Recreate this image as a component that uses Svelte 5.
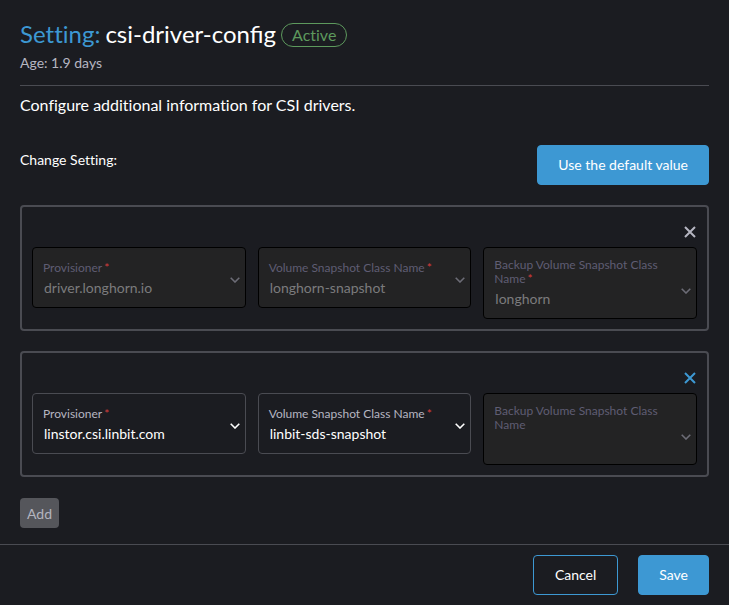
<script>
  const className = 'Volume Snapshot Class Name';

  const drivers = [
    {
      locked: true,
      fields: [
        { label: 'Provisioner', value: 'driver.longhorn.io', required: true, disabled: true },
        { label: className, value: 'longhorn-snapshot', required: true, disabled: true },
        { label: 'Backup ' + className, value: 'longhorn', required: true, disabled: true }
      ]
    },
    {
      locked: false,
      fields: [
        { label: 'Provisioner', value: 'linstor.csi.linbit.com', required: true, disabled: false },
        { label: className, value: 'linbit-sds-snapshot', required: true, disabled: false },
        { label: 'Backup ' + className, value: '', required: false, disabled: true }
      ]
    }
  ];
</script>

<div class="page">
  <main>
    <header>
      <h1>
        <a href="#settings">Setting:</a>
        <span class="name">csi-driver-config</span>
        <span class="badge">Active</span>
      </h1>
      <p class="age">Age: 1.9 days</p>
    </header>

    <p class="description">Configure additional information for CSI drivers.</p>

    <div class="toolbar">
      <h2>Change Setting:</h2>
      <button type="button" class="btn primary">Use the default value</button>
    </div>

    <div class="panels">
      {#each drivers as driver, row}
        <section class="panel">
          <button type="button" class="remove" disabled={driver.locked} aria-label="Remove driver">
            <svg width="12" height="12" viewBox="0 0 12 12" aria-hidden="true">
              <path d="M1 1 L11 11 M11 1 L1 11" />
            </svg>
          </button>
          <div class="fields">
            {#each driver.fields as field, col}
              <div class="field" class:disabled={field.disabled}>
                <label for="field-{row}-{col}" class:required={field.required}>{field.label}</label>
                <select id="field-{row}-{col}" disabled={field.disabled} required={field.required}>
                  <option value={field.value}>{field.value}</option>
                </select>
                <svg class="chevron" width="10" height="6" viewBox="0 0 10 6" aria-hidden="true">
                  <path d="M0.7 0.8 L5 5 L9.3 0.8" />
                </svg>
              </div>
            {/each}
          </div>
        </section>
      {/each}
    </div>

    <button type="button" class="add" disabled>Add</button>
  </main>

  <footer>
    <button type="button" class="btn outline">Cancel</button>
    <button type="button" class="btn primary">Save</button>
  </footer>
</div>

<style>
  :global(body) {
    margin: 0;
    background: #1b1c21;
  }

  .page {
    min-height: 100vh;
    box-sizing: border-box;
    display: flex;
    flex-direction: column;
    font-family: Lato, 'Liberation Sans', sans-serif;
    font-size: 14px;
    line-height: 20px;
    font-variant-ligatures: none;
    color: #fff;
    background: #1b1c21;
  }

  main {
    flex: 1;
    padding: 20px 20px 16px;
  }

  header {
    padding-bottom: 12px;
    border-bottom: 1px solid #4a4b52;
  }

  h1 {
    display: flex;
    align-items: center;
    margin: 0;
    font-size: 24px;
    line-height: 28px;
    font-weight: 400;
  }

  h1 a,
  .name {
    padding-bottom: 2px;
  }

  h1 a {
    color: #3d98d3;
    text-decoration: none;
  }

  .name {
    margin-left: 5px;
    font-variant-ligatures: common-ligatures;
  }

  .badge {
    margin-left: 5px;
    padding: 0 10px;
    border: 1px solid #5d995d;
    border-radius: 20px;
    color: #5d995d;
    font-size: 16px;
    line-height: 22px;
  }

  .age {
    margin: 3px 0 0;
    color: #b6b6c2;
  }

  .description {
    margin: 9px 0 0;
    font-size: 16px;
    line-height: 20px;
  }

  .toolbar {
    display: flex;
    justify-content: space-between;
    align-items: flex-start;
    margin: 30px 0 20px;
  }

  h2 {
    margin: 5px 0 0;
    font-size: 14px;
    line-height: 20px;
    font-weight: 400;
  }

  button,
  select {
    font-family: inherit;
    font-size: 14px;
    font-variant-ligatures: none;
  }

  .btn {
    height: 40px;
    padding: 0 20px 2px;
    border: 1px solid #3d98d3;
    border-radius: 4px;
    color: #fff;
    cursor: pointer;
  }

  .primary {
    background: #3d98d3;
  }

  .outline {
    padding: 0 21px 2px;
    background: transparent;
  }

  .panels {
    display: flex;
    flex-direction: column;
    gap: 20px;
  }

  .panel {
    display: flex;
    flex-direction: column;
    padding: 10px;
    border: 2px solid #4a4b52;
    border-radius: 4px;
  }

  .remove {
    align-self: flex-end;
    display: flex;
    align-items: center;
    height: 30px;
    padding: 0 1px;
    border: 0;
    background: none;
    color: #3d98d3;
    cursor: pointer;
  }

  .remove:disabled {
    color: #b6b6c2;
    cursor: not-allowed;
  }

  svg path {
    fill: none;
    stroke: currentColor;
    stroke-width: 2;
  }

  .fields {
    display: grid;
    grid-template-columns: repeat(3, 1fr);
    align-items: start;
    gap: 12px;
  }

  .field {
    position: relative;
    display: flex;
    flex-direction: column;
    box-sizing: border-box;
    min-height: 61px;
    padding: 10px 10px 9px;
    border: 1px solid #4a4b52;
    border-radius: 4px;
  }

  .field.disabled {
    border-color: #000;
    background: #232324;
  }

  label {
    margin-top: auto;
    color: #b6b6c2;
    font-size: 12px;
    line-height: 14px;
  }

  .disabled label {
    color: #5f5d73;
  }

  .required::after {
    content: '*';
    margin-left: 2px;
    color: #d63c3c;
  }

  select {
    appearance: none;
    height: 22px;
    padding: 0 16px 0 1px;
    margin: 1px 0 0;
    border: 0;
    background: transparent;
    color: #fff;
    opacity: 1;
  }

  select:disabled {
    color: #7b7b7d;
  }

  .chevron {
    position: absolute;
    right: 5px;
    bottom: 24px;
    pointer-events: none;
  }

  .chevron path {
    stroke-width: 1.6;
  }

  .disabled .chevron {
    color: #6c6c76;
  }

  .add {
    height: 30px;
    margin-top: 21px;
    padding: 0 7px;
    border: 0;
    border-radius: 4px;
    background: #55565b;
    color: #b3b4bf;
    cursor: not-allowed;
  }

  footer {
    display: flex;
    justify-content: flex-end;
    gap: 20px;
    padding: 10px 20px;
    border-top: 1px solid #4a4b52;
  }
</style>
